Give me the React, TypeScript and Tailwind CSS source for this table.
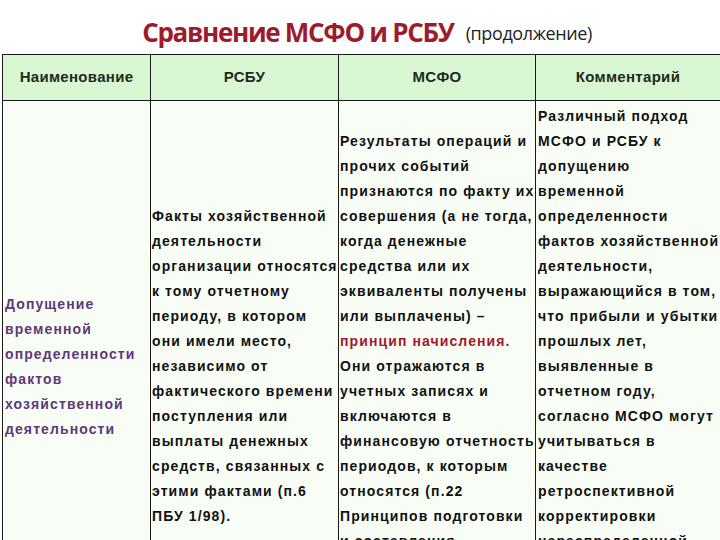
const col1 = ['Допущение', 'временной', 'определенности', 'фактов', 'хозяйственной', 'деятельности']

const col2 = [
  'Факты хозяйственной',
  'деятельности',
  'организации относятся',
  'к тому отчетному',
  'периоду, в котором',
  'они имели место,',
  'независимо от',
  'фактического времени',
  'поступления или',
  'выплаты денежных',
  'средств, связанных с',
  'этими фактами (п.6',
  'ПБУ 1/98).',
]

const col3 = [
  'Результаты операций и',
  'прочих событий',
  'признаются по факту их',
  'совершения (а не тогда,',
  'когда денежные',
  'средства или их',
  'эквиваленты получены',
  'или выплачены) –',
  '*принцип начисления.',
  'Они отражаются в',
  'учетных записях и',
  'включаются в',
  'финансовую отчетность',
  'периодов, к которым',
  'относятся (п.22',
  'Принципов подготовки',
  'и составления',
  'финансовой',
  'отчетности).',
]

const col4 = [
  'Различный подход',
  'МСФО и РСБУ к',
  'допущению',
  'временной',
  'определенности',
  'фактов хозяйственной',
  'деятельности,',
  'выражающийся в том,',
  'что прибыли и убытки',
  'прошлых лет,',
  'выявленные в',
  'отчетном году,',
  'согласно МСФО могут',
  'учитываться в',
  'качестве',
  'ретроспективной',
  'корректировки',
  'нераспределенной',
  'прибыли, а согласно',
  'РСБУ – в текущем',
  'периоде.',
]

// a leading * marks a line drawn in red
function Lines({ lines, className }: { lines: string[]; className?: string }) {
  return (
    <div className={`self-center ${className ?? ''}`}>
      {lines.map((l, i) =>
        l.startsWith('*') ? (
          <div key={i} className="h-[25px] leading-[25px] whitespace-nowrap text-[#a3182a]">{l.slice(1)}</div>
        ) : (
          <div key={i} className="h-[25px] leading-[25px] whitespace-nowrap">{l}</div>
        )
      )}
    </div>
  )
}

export default function App() {
  return (
    <div className="w-[720px] h-[540px] overflow-hidden bg-white" style={{ fontFamily: '"Liberation Sans", Arial, sans-serif' }}>
      {/* Title */}
      <div className="h-[54px] flex items-center justify-center pl-[14px] pt-[10px]">
        <span className="text-[26px] font-bold text-[#9e1b2c] tracking-[-1.3px]" style={{ fontFamily: '"Open Sans", sans-serif' }}>
          Сравнение МСФО и РСБУ
        </span>
        <span className="ml-[12px] mt-[2px] text-[18px] text-[#222] tracking-[-0.4px]" style={{ fontFamily: '"Open Sans", sans-serif' }}>
          (продолжение)
        </span>
      </div>

      {/* Table */}
      <div className="ml-[2px] border-t border-[#1a1a1a]">
        <div className="grid grid-cols-[148px_188px_197px_1fr] h-[46px] bg-[#d9f7d2] border-b border-[#1a1a1a] text-[15px] font-bold tracking-[0.3px] text-[#1f2a1f]">
          <div className="border-l border-[#1a1a1a] flex items-center justify-center">Наименование</div>
          <div className="border-l border-[#1a1a1a] flex items-center justify-center">РСБУ</div>
          <div className="border-l border-[#1a1a1a] flex items-center justify-center">МСФО</div>
          <div className="border-l border-[#1a1a1a] flex items-center justify-center">Комментарий</div>
        </div>

        <div className="grid grid-cols-[148px_188px_197px_1fr] bg-[#f8fdf6] text-[14px] font-bold tracking-[1.1px] text-[#111]">
          <div className="border-l border-[#1a1a1a] flex pl-[2px]">
            <Lines lines={col1} className="text-[#5e3878]" />
          </div>
          <div className="border-l border-[#1a1a1a] flex pl-[1px]">
            <Lines lines={col2} />
          </div>
          <div className="border-l border-[#1a1a1a] flex pl-[1px]">
            <Lines lines={col3} />
          </div>
          <div className="border-l border-[#1a1a1a] flex pl-[2px] py-[3px]">
            <Lines lines={col4} />
          </div>
        </div>
      </div>
    </div>
  )
}
